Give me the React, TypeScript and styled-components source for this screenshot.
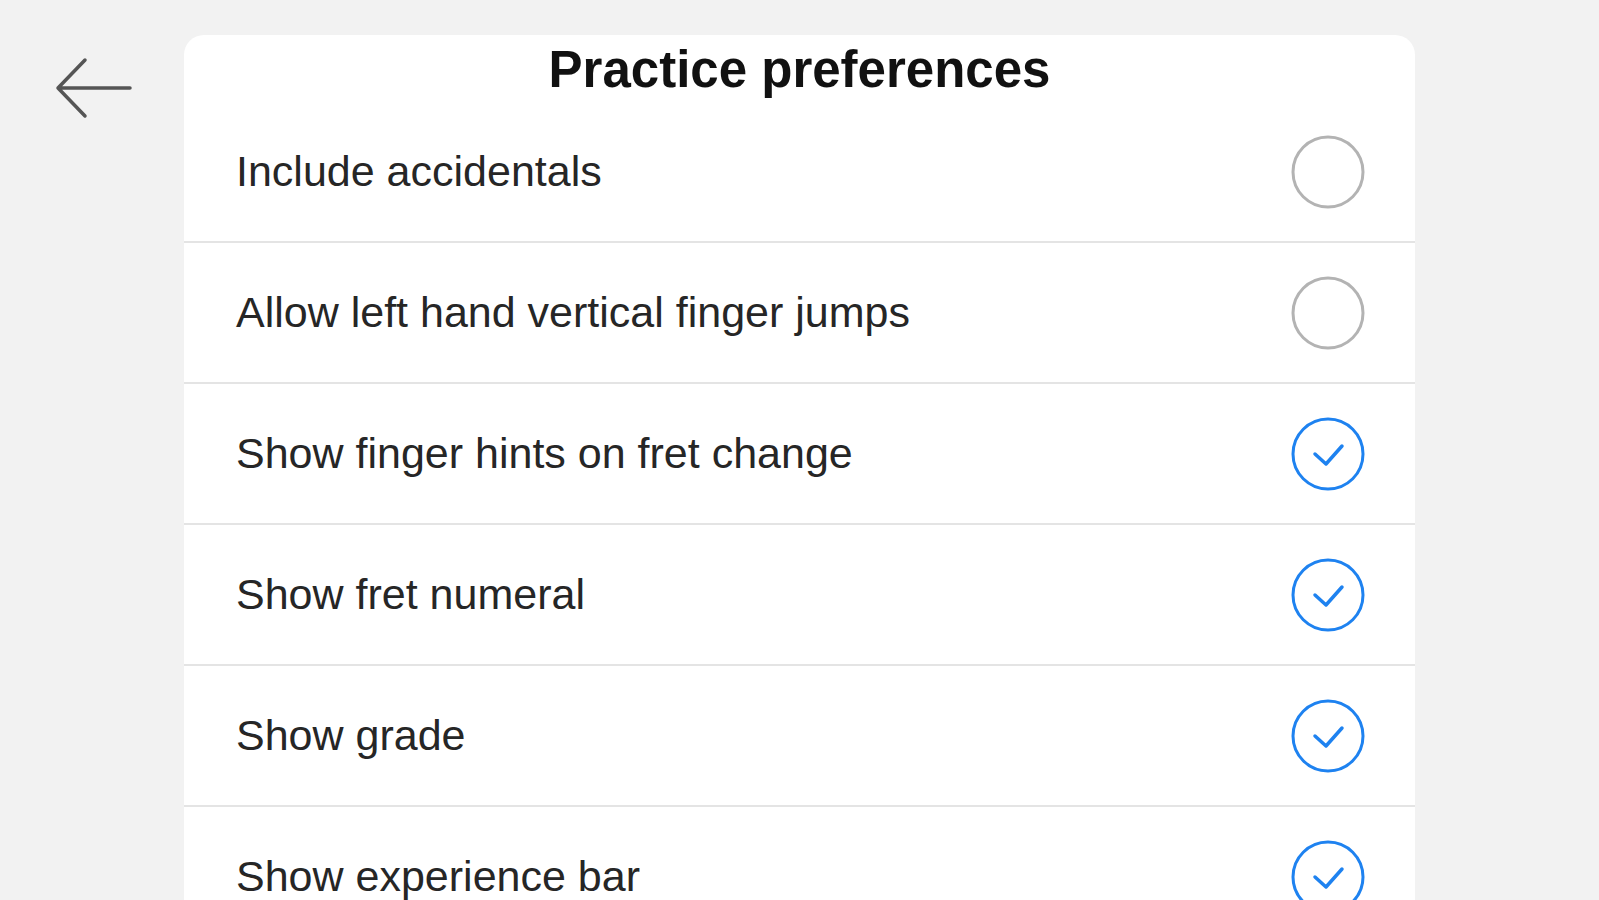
import styled, { createGlobalStyle } from "styled-components";

const GlobalStyle = createGlobalStyle`
  html, body {
    margin: 0;
    padding: 0;
    background: #f2f2f2;
    font-family: "Liberation Sans", Arial, sans-serif;
    overflow: hidden;
  }
`;

const Page = styled.div`
  display: flex;
  align-items: flex-start;
  height: 900px;
  padding-top: 35px;
  box-sizing: border-box;
`;

const BackColumn = styled.div`
  width: 184px;
  flex-shrink: 0;
  display: flex;
  justify-content: flex-start;
  padding-left: 55px;
  padding-top: 21px;
  box-sizing: border-box;
`;

const BackButton = styled.button`
  border: none;
  background: none;
  padding: 0;
  cursor: pointer;
  display: flex;
`;

const Card = styled.div`
  width: 1231px;
  background: #fff;
  border-radius: 20px 20px 0 0;
  display: flex;
  flex-direction: column;
`;

const Title = styled.h1`
  margin: 0;
  height: 67px;
  display: flex;
  align-items: center;
  justify-content: center;
  padding-top: 2px;
  box-sizing: border-box;
  font-size: 51px;
  font-weight: 700;
  color: #111;
`;

const Row = styled.div`
  height: 141px;
  display: flex;
  align-items: center;
  justify-content: space-between;
  padding: 0 50px 0 52px;
  box-sizing: border-box;
  border-bottom: 2px solid #e4e4e4;
`;

const Label = styled.span`
  font-size: 43px;
  color: #262626;
`;

const Toggle = styled.svg`
  width: 74px;
  height: 74px;
  flex-shrink: 0;
`;

const BackArrow = () => (
  <svg width="78" height="64" viewBox="0 0 78 64" fill="none">
    <path
      d="M75 32H3M30 4L3 32L30 60"
      stroke="#555"
      strokeWidth="3.5"
      strokeLinecap="round"
      strokeLinejoin="round"
    />
  </svg>
);

const CheckCircle = ({ checked }: { checked: boolean }) => (
  <Toggle viewBox="0 0 74 74" fill="none">
    <circle
      cx="37"
      cy="37"
      r="35"
      stroke={checked ? "#1e82f0" : "#b3b3b3"}
      strokeWidth="3"
    />
    {checked && (
      <path
        d="M24 37L35 47L51 29"
        stroke="#1e82f0"
        strokeWidth="3.5"
        strokeLinecap="round"
        strokeLinejoin="round"
      />
    )}
  </Toggle>
);

const preferences = [
  { label: "Include accidentals", checked: false },
  { label: "Allow left hand vertical finger jumps", checked: false },
  { label: "Show finger hints on fret change", checked: true },
  { label: "Show fret numeral", checked: true },
  { label: "Show grade", checked: true },
  { label: "Show experience bar", checked: true },
];

export default function App() {
  return (
    <>
      <GlobalStyle />
      <Page>
        <BackColumn>
          <BackButton aria-label="Back">
            <BackArrow />
          </BackButton>
        </BackColumn>
        <Card>
          <Title>Practice preferences</Title>
          {preferences.map((p) => (
            <Row key={p.label}>
              <Label>{p.label}</Label>
              <CheckCircle checked={p.checked} />
            </Row>
          ))}
        </Card>
      </Page>
    </>
  );
}
